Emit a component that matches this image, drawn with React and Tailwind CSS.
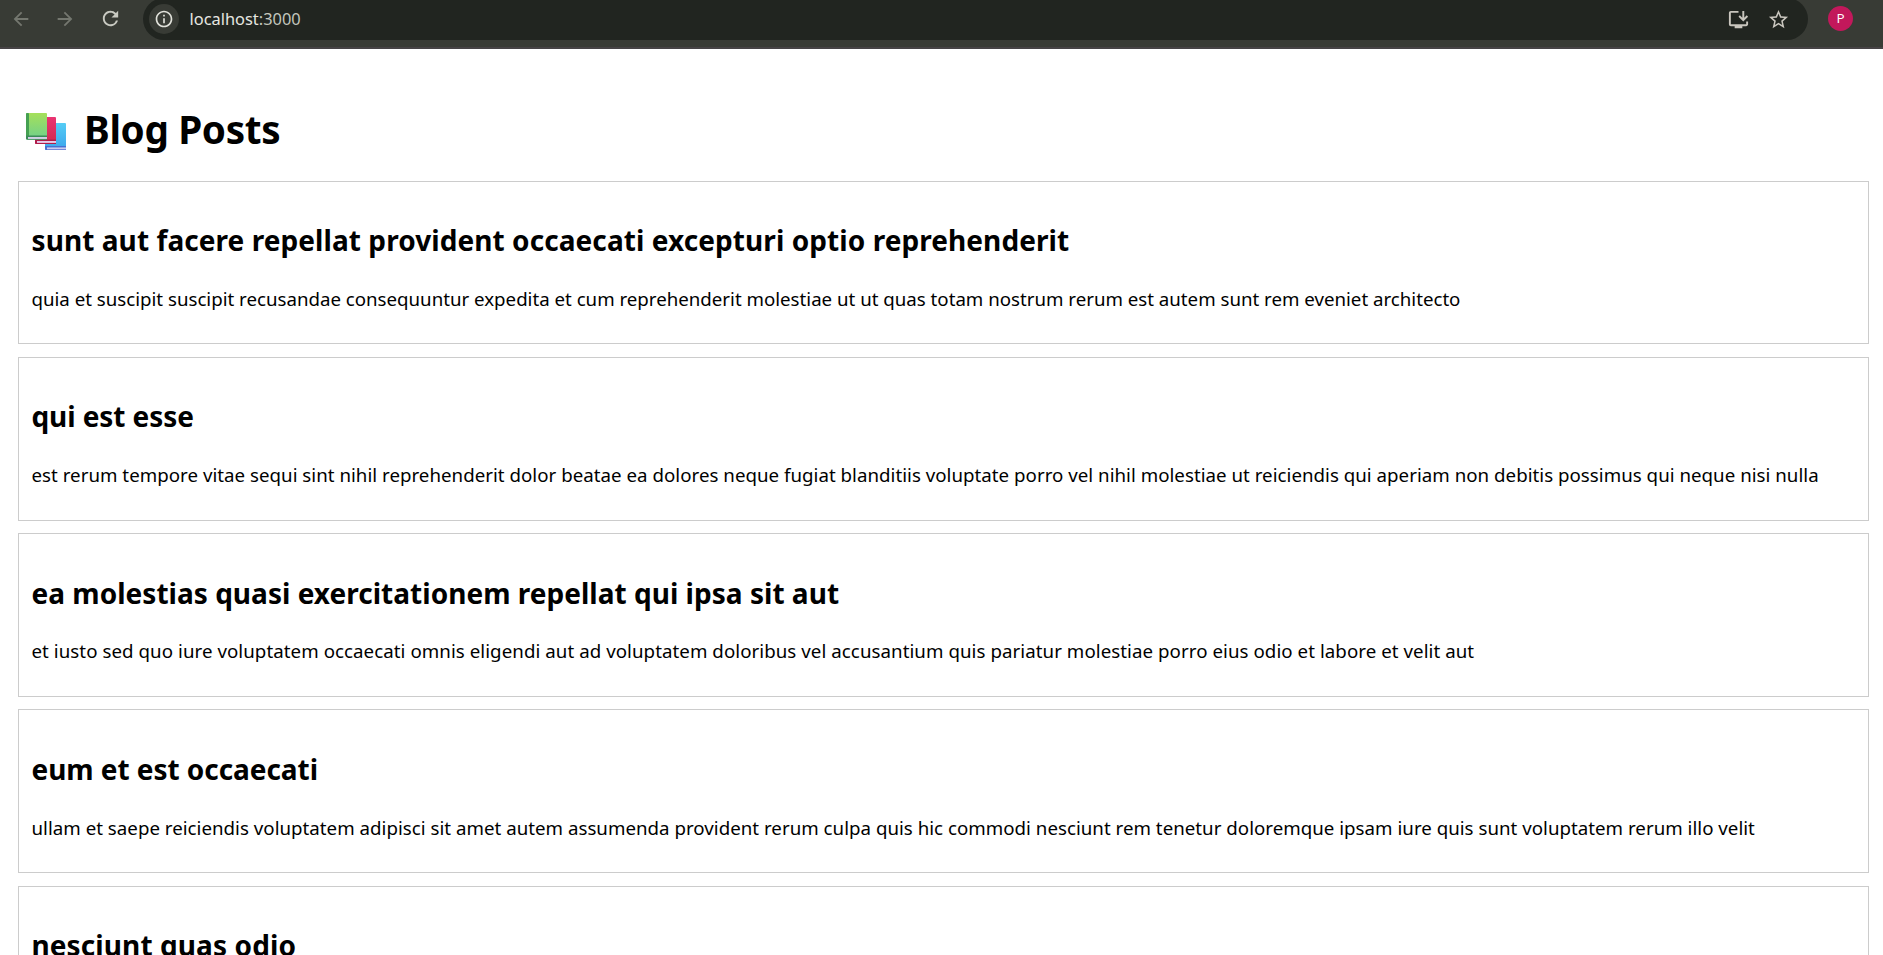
import React from 'react';
import {
  MdArrowBack,
  MdArrowForward,
  MdRefresh,
  MdInfoOutline,
  MdInstallDesktop,
  MdStarOutline,
} from 'react-icons/md';

const posts = [
  {
    title: 'sunt aut facere repellat provident occaecati excepturi optio reprehenderit',
    titleClass: 'tracking-[0.075px]',
    body: 'quia et suscipit suscipit recusandae consequuntur expedita et cum reprehenderit molestiae ut ut quas totam nostrum rerum est autem sunt rem eveniet architecto',
    bodyClass: 'tracking-[-0.004px]',
  },
  {
    title: 'qui est esse',
    titleClass: 'tracking-[-0.08px]',
    body: 'est rerum tempore vitae sequi sint nihil reprehenderit dolor beatae ea dolores neque fugiat blanditiis voluptate porro vel nihil molestiae ut reiciendis qui aperiam non debitis possimus qui neque nisi nulla',
    bodyClass: 'tracking-[0.028px]',
  },
  {
    title: 'ea molestias quasi exercitationem repellat qui ipsa sit aut',
    titleClass: 'tracking-[0.025px]',
    body: 'et iusto sed quo iure voluptatem occaecati omnis eligendi aut ad voluptatem doloribus vel accusantium quis pariatur molestiae porro eius odio et labore et velit aut',
    bodyClass: 'tracking-[0.063px]',
  },
  {
    title: 'eum et est occaecati',
    titleClass: 'tracking-[-0.05px]',
    body: 'ullam et saepe reiciendis voluptatem adipisci sit amet autem assumenda provident rerum culpa quis hic commodi nesciunt rem tenetur doloremque ipsam iure quis sunt voluptatem rerum illo velit',
    bodyClass: 'tracking-[0.022px]',
  },
  {
    title: 'nesciunt quas odio',
    titleClass: 'tracking-[0.1px]',
    body: '',
    bodyClass: '',
  },
];

function Books() {
  return (
    <svg width="41" height="38" viewBox="0 0 41 38" className="shrink-0">
      <defs>
        <linearGradient id="green" x1="0" y1="0" x2="0" y2="1">
          <stop offset="0" stopColor="#a5e05a" />
          <stop offset="1" stopColor="#6fd08c" />
        </linearGradient>
        <linearGradient id="red" x1="0" y1="0" x2="0" y2="1">
          <stop offset="0" stopColor="#ea3473" />
          <stop offset="1" stopColor="#cf2a4c" />
        </linearGradient>
        <linearGradient id="blue" x1="0" y1="0" x2="0" y2="1">
          <stop offset="0" stopColor="#55cdf5" />
          <stop offset="1" stopColor="#3ba4ec" />
        </linearGradient>
      </defs>
      <rect x="19" y="10" width="21" height="27" rx="1" fill="url(#blue)" />
      <path d="M19 33h21v1.5H21v1.5h19v1H20.500a1.500 1.500 0 0 1-1.500-1.500z" fill="#4a6fd0" />
      <rect x="21" y="34.500" width="19" height="1.800" fill="#cfc9ee" />
      <rect x="9" y="4" width="21" height="27" rx="1" fill="url(#red)" />
      <path d="M9 26.500h21V28H11v2h19v1H10.500A1.500 1.500 0 0 1 9 29.500z" fill="#b01d4b" />
      <rect x="11" y="28" width="19" height="1.900" fill="#e3cdea" />
      <rect x="0" y="0" width="21" height="26.500" rx="1" fill="url(#green)" />
      <rect x="0" y="0" width="3" height="26" rx="1" fill="#45a052" />
      <path d="M0 22.500h21V24H2v2h19v.8H1.500A1.500 1.500 0 0 1 0 25.300z" fill="#3b8a58" />
      <rect x="2" y="24" width="19" height="1.900" fill="#d3cfe6" />
    </svg>
  );
}

function BrowserBar() {
  return (
    <header className="flex h-[49px] shrink-0 items-start overflow-hidden border-b-2 border-[#464345] bg-[#383b35]">
      <div className="flex h-[37px] w-[143px] shrink-0 items-center gap-[22.500px] pl-[9.500px] text-[#74776f]">
        <MdArrowBack size={22} />
        <MdArrowForward size={22} />
        <MdRefresh size={23} className="text-[#c9cac2]" />
      </div>
      <div className="-mt-[2px] flex h-[42px] w-[1665px] shrink-0 items-center rounded-full bg-[#212520] pl-[6px] pr-[18px]">
        <span className="flex size-[30px] items-center justify-center rounded-full bg-[#383b35] text-[#e0e1da]">
          <MdInfoOutline size={20} />
        </span>
        <span className="ml-[10.500px] flex-1 text-[16.400px] leading-6 text-[#e6e7e0]">
          localhost<span className="text-[#c3c5bc]">:3000</span>
        </span>
        <MdInstallDesktop size={23} className="text-[#c9c6be]" />
        <MdStarOutline size={23} className="ml-[17px] text-[#c9c6be]" />
      </div>
      <span className="ml-5 mt-[6px] flex size-[25px] items-center justify-center rounded-full bg-[#c2185b] font-['Open_Sans',sans-serif] text-[13.500px] leading-none text-white">
        P
      </span>
    </header>
  );
}

function PostCard({ post }) {
  return (
    <article className="mb-[12.600px] h-[163.600px] shrink-0 border border-[#cccccc] pl-[12.500px] pt-[38.350px]">
      <h2 className={'whitespace-nowrap text-[28px] font-bold leading-10 ' + post.titleClass}>{post.title}</h2>
      <p className={'mt-[24.850px] whitespace-nowrap text-[18.700px] leading-[27px] ' + post.bodyClass}>{post.body}</p>
    </article>
  );
}

export default function App() {
  return (
    <div className="flex h-[955px] w-[1883px] flex-col overflow-hidden bg-white font-['Noto_Sans','Open_Sans',sans-serif] text-black">
      <BrowserBar />
      <main className="flex min-h-0 flex-1 flex-col overflow-hidden pl-[18px] pr-[14px] pt-[53px]">
        <h1 className="flex h-[78.800px] shrink-0 items-start pl-2 text-[38.700px] font-bold leading-[54px] tracking-[-0.35px]">
          <span className="pt-[11px]">
            <Books />
          </span>
          <span className="ml-[17px]">Blog Posts</span>
        </h1>
        {posts.map((post) => (
          <PostCard key={post.title} post={post} />
        ))}
      </main>
    </div>
  );
}
